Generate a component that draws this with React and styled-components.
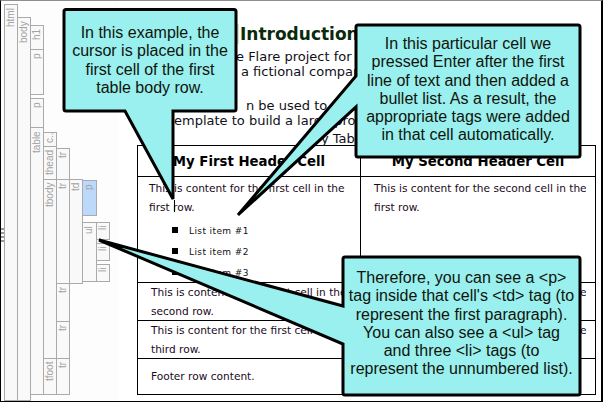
import React from 'react';
import styled, { createGlobalStyle } from 'styled-components';

const GlobalStyle = createGlobalStyle`
  html, body {
    margin: 0;
    padding: 0;
    background: #fff;
  }
`;

const Frame = styled.div`
  position: relative;
  box-sizing: border-box;
  width: 603px;
  height: 402px;
  display: flex;
  overflow: hidden;
  background: #fff;
  border: 1px solid #000;
  border-top-color: #8e8e8e;
  border-right-width: 2px;
`;

const Rail = styled.div`
  flex: 0 0 118px;
  box-sizing: border-box;
  padding-left: 3px;
  display: grid;
  grid-template-columns: repeat(6, 13px) 14px 13px;
  grid-template-rows: repeat(400, 1px);
  background: #fdfdfd;
`;

const Bar = styled.div`
  grid-column: ${(p) => p.$col};
  grid-row: ${(p) => p.$from} / ${(p) => p.$to};
  box-sizing: border-box;
  margin: 0 -1px -1px 0;
  border: 1px solid #aaa;
  background: ${(p) => (p.$active ? '#bcd9fb' : '#f9f9f9')};
  overflow: hidden;
  writing-mode: vertical-rl;
  transform: rotate(180deg);
  text-align: right;
  padding: 3px 0;
  font: 10px/12px 'Liberation Sans', sans-serif;
  color: #a2a2a2;
`;

const Grip = styled.div`
  position: absolute;
  left: 0;
  top: 227px;
  width: 3px;
  height: 15px;
  background: repeating-linear-gradient(#999 0 2px, transparent 2px 4px);
`;

const Doc = styled.div`
  flex: 1;
  box-sizing: border-box;
  padding: 23px 5px 0 18px;
  font-family: 'DejaVu Sans', sans-serif;
  color: #1a0a22;
`;

const Title = styled.h1`
  margin: 0 0 0 100px;
  padding-left: 1px;
  border-left: 2px solid #cfe8cf;
  font: bold 17px/20px 'DejaVu Sans', sans-serif;
  color: #0b2a0b;
  white-space: nowrap;
`;

const IntroLine = styled.div`
  margin-left: ${(p) => p.$indent}px;
  margin-top: ${(p) => p.$gap || 0}px;
  font-size: 13px;
  line-height: 15px;
  white-space: nowrap;
  color: #101018;
`;

const Table = styled.table`
  width: 459px;
  height: 247px;
  margin-top: -1px;
  table-layout: fixed;
  border-collapse: collapse;
  border: 1px solid #000;
  font-size: 10.6px;
`;

const Th = styled.th`
  height: 30px;
  padding: 0;
  border: 1px solid #000;
  font: bold 13.3px 'DejaVu Sans', sans-serif;
  color: #000;
  text-align: center;
`;

const Td = styled.td`
  height: ${(p) => p.$h}px;
  padding: ${(p) => p.$pad || '0 5px 0 13px'};
  border: 1px solid #000;
  vertical-align: ${(p) => p.$align || 'middle'};
  line-height: 18.5px;
`;

const List = styled.ul`
  margin: 5px 0 -8px;
  padding: 0 0 0 23px;
  list-style: none;
`;

const Item = styled.li`
  position: relative;
  padding-left: 17px;
  height: 21px;
  line-height: 21px;
  font-size: 9px;
  letter-spacing: 0.4px;
  color: #111;

  &::before {
    content: '';
    position: absolute;
    left: 0;
    top: 6px;
    width: 6px;
    height: 6px;
    background: #000;
  }
`;

const Cursor = styled.span`
  position: absolute;
  left: 173px;
  top: 199px;
  width: 1px;
  height: 12px;
  background: #000;
`;

const Overlay = styled.svg`
  position: absolute;
  left: -1px;
  top: -1px;
  width: 603px;
  height: 402px;
`;

const Note = styled.div`
  position: absolute;
  left: ${(p) => p.$left}px;
  top: ${(p) => p.$top}px;
  width: ${(p) => p.$width}px;
  text-align: center;
  white-space: nowrap;
  font: 16px/18.3px 'Liberation Sans', sans-serif;
  color: #10140c;
`;

// tag blocks of the structure bar: column, top, bottom
const tags = [
  ['html', 1, 4, 400],
  ['body', 2, 17, 400],
  ['h1', 3, 25, 49],
  ['p', 3, 49, 94],
  ['p', 3, 98, 127],
  ['table', 3, 127, 394],
  ['c..', 4, 132, 146],
  ['thead', 4, 146, 179],
  ['tbody', 4, 179, 358],
  ['tfoot', 4, 358, 394],
  ['tr', 5, 148, 179],
  ['tr', 5, 179, 283],
  ['tr', 5, 283, 321],
  ['tr', 5, 321, 358],
  ['tr', 5, 358, 394],
  ['td', 6, 179, 283],
  ['p', 7, 180, 215, true],
  ['ul', 7, 222, 281],
  ['li', 8, 222, 239],
  ['li', 8, 243, 260],
  ['li', 8, 264, 281],
];

const balloons = [
  'M66 9.5 H234 Q236 9.5 236 11.5 V109 Q236 111 234 111 H173 V199 L125 111 H66 Q64 111 64 109 V11.5 Q64 9.5 66 9.5 Z',
  'M358 25 H578 Q580 25 580 27 V155 Q580 157 578 157 H358 Q356 157 356 155 V107 L238 215 L356 76 V27 Q356 25 358 25 Z',
  'M345 257 H578 Q580 257 580 259 V393 Q580 395 578 395 H345 Q343 395 343 393 V344 L99 240 L343 306 V259 Q343 257 345 257 Z',
];

const App = () => (
  <>
    <GlobalStyle />
    <Frame>
      <Rail>
        {tags.map(([name, col, from, to, active], i) => (
          <Bar key={i} $col={col} $from={from} $to={to} $active={active}>
            {name}
          </Bar>
        ))}
      </Rail>
      <Grip />
      <Doc>
        <Title>Introduction</Title>
        <IntroLine $indent={99} $gap={5}>e Flare project for</IntroLine>
        <IntroLine $indent={104}>a fictional company</IntroLine>
        <IntroLine $indent={109} $gap={19}>n be used to ex</IntroLine>
        <IntroLine $indent={37}>emplate to build a large pro</IntroLine>
        <IntroLine $indent={184} $gap={3}>y Tab</IntroLine>
        <Table>
          <colgroup>
            <col style={{ width: 223 }} />
            <col />
          </colgroup>
          <thead>
            <tr>
              <Th>My First Header Cell</Th>
              <Th>My Second Header Cell</Th>
            </tr>
          </thead>
          <tbody>
            <tr>
              <Td $h={103} $align="top" $pad="2px 5px 0 11px">
                This is content for the first cell in the first row.
                <List>
                  <Item>List item #1</Item>
                  <Item>List item #2</Item>
                  <Item>List item #3</Item>
                </List>
              </Td>
              <Td $h={103} $align="top" $pad="2px 5px 0 13px">
                This is content for the second cell in the first row.
              </Td>
            </tr>
            <tr>
              <Td $h={37}>This is content for the first cell in the second row.</Td>
              <Td $h={37}>This is content for the second cell in the second row.</Td>
            </tr>
            <tr>
              <Td $h={37}>This is content for the first cell in the third row.</Td>
              <Td $h={37}>This is content for the second cell in the third row.</Td>
            </tr>
          </tbody>
          <tfoot>
            <tr>
              <Td $h={35}>Footer row content.</Td>
              <Td $h={35} />
            </tr>
          </tfoot>
        </Table>
      </Doc>
      <Cursor />
      <Overlay viewBox="0 0 603 402">
        {balloons.map((d, i) => (
          <path key={i} d={d} fill="#99f0ee" stroke="#000" strokeWidth="3" strokeLinejoin="miter" />
        ))}
      </Overlay>
      <Note $left={63} $top={23} $width={172}>
        In this example, the<br />
        cursor is placed in the<br />
        first cell of the first<br />
        table body row.
      </Note>
      <Note $left={355} $top={34} $width={224}>
        In this particular cell we<br />
        pressed Enter after the first<br />
        line of text and then added a<br />
        bullet list. As a result, the<br />
        appropriate tags were added<br />
        in that cell automatically.
      </Note>
      <Note $left={342} $top={268} $width={237}>
        Therefore, you can see a &lt;p&gt;<br />
        tag inside that cell's &lt;td&gt; tag (to<br />
        represent the first paragraph).<br />
        You can also see a &lt;ul&gt; tag<br />
        and three &lt;li&gt; tags (to<br />
        represent the unnumbered list).
      </Note>
    </Frame>
  </>
);

export default App;
